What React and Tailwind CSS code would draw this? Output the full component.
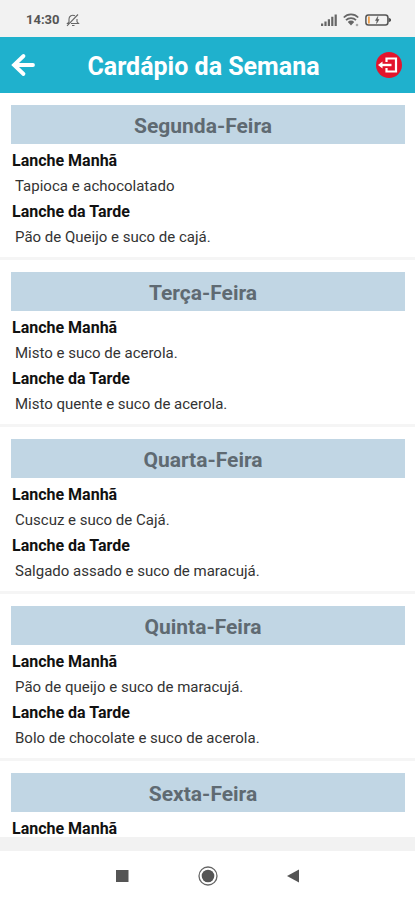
const days = [
  { name: "Segunda-Feira", morning: "Tapioca e achocolatado", afternoon: "Pão de Queijo e suco de cajá." },
  { name: "Terça-Feira", morning: "Misto e suco de acerola.", afternoon: "Misto quente e suco de acerola." },
  { name: "Quarta-Feira", morning: "Cuscuz e suco de Cajá.", afternoon: "Salgado assado e suco de maracujá." },
  { name: "Quinta-Feira", morning: "Pão de queijo e suco de maracujá.", afternoon: "Bolo de chocolate e suco de acerola." },
  { name: "Sexta-Feira", morning: "", afternoon: "" },
];

function MutedBell() {
  return (
    <svg className="h-3.5 w-3.5" viewBox="0 0 14 14" fill="none" stroke="#666" strokeWidth="1.100" aria-hidden="true">
      <path d="M5 10.500h7.500L11 8.800V6M9 2.800C6 1.300 3 3.200 3 6v2.800L1.500 10.500H3M6 12.500h2.500M1 12.800 12 1.500" />
    </svg>
  );
}

function Signal() {
  return (
    <svg className="h-3 w-4" viewBox="0 0 16 12" fill="#666" aria-hidden="true">
      <path d="M0 9.500h2.200V12H0zM3.400 7.500h2.200V12H3.400zM6.800 5.200H9V12H6.800zM10.200 2.800h2.200V12h-2.200zM13.600 0.500h2.200V12h-2.200z" />
    </svg>
  );
}

function Wifi() {
  return (
    <svg className="h-3.5 w-4" viewBox="0 0 16 14" fill="none" stroke="#666" aria-hidden="true">
      <path d="M0.800 4.500a10 10 0 0 1 14.400 0M3 7.200a7 7 0 0 1 10 0" strokeWidth="1.800" />
      <path d="M4.800 9a4.400 4.400 0 0 1 6.400 0L8 12.500z" fill="#666" stroke="none" />
      <circle cx="14" cy="12" r="1.300" fill="#aaa" stroke="none" />
    </svg>
  );
}

function Battery() {
  return (
    <svg className="h-3 w-[26px]" viewBox="0 0 26 12" fill="none" aria-hidden="true">
      <rect x="0.900" y="0.900" width="22" height="10.200" rx="2.500" stroke="#555" strokeWidth="1.500" />
      <path d="M23.500 3.500 26 5v2l-2.500 1.500z" fill="#555" />
      <path d="M3 2.500h1.800v7H3z" fill="#f0a04b" />
      <path d="M12.800 2.500 10.500 6.500h1.600l-.6 3 2.500-4h-1.600z" fill="#555" stroke="#555" strokeWidth="0.500" />
    </svg>
  );
}

function Day({ day }) {
  return (
    <section className="border-b-[3px] border-[#f5f5f5] pt-3 pr-2.5 pb-2 pl-[11px]">
      <h2 className="mb-1 flex h-[39px] items-center justify-center bg-[#c1d6e4] pt-[3px] pr-2.5 text-[21px] leading-6 font-bold text-[#5f6a72]">
        {day.name}
      </h2>
      <div className="pl-px">
        <h3 className="text-[16px] leading-[26px] font-bold text-[#111]">Lanche Manhã</h3>
        <p className="pl-[3px] text-[15px] leading-[25px] text-[#333]">{day.morning}</p>
        {day.afternoon && (
          <>
            <h3 className="text-[16px] leading-[26px] font-bold text-[#111]">Lanche da Tarde</h3>
            <p className="-mb-px pl-[3px] text-[15px] leading-[25px] text-[#333]">{day.afternoon}</p>
          </>
        )}
      </div>
    </section>
  );
}

export default function App() {
  return (
    <div className="flex h-screen flex-col bg-white font-[Roboto,'Liberation_Sans',sans-serif]">
      <div className="flex h-[37px] shrink-0 items-center justify-between bg-[#f2f2f2] pt-[2px] pr-6 pl-[26px]">
        <div className="flex items-center gap-1.5">
          <span className="text-[13px] leading-4 font-bold text-[#555]">14:30</span>
          <MutedBell />
        </div>
        <div className="flex items-center gap-1.5">
          <Signal />
          <Wifi />
          <Battery />
        </div>
      </div>

      <header className="flex h-14 shrink-0 items-center justify-between bg-[#1fb1cd] pr-3 pl-[11px]">
        <button type="button" aria-label="Voltar" className="text-white">
          <svg className="h-6 w-6" viewBox="0 0 24 24" fill="none" stroke="currentColor" strokeWidth="3.800" strokeLinecap="round" aria-hidden="true">
            <path d="M22 12H4M12.500 3 3 12l9.500 9" />
          </svg>
        </button>
        <h1 className="pt-[3px] pr-[3px] text-[25px] leading-8 font-bold text-white">Cardápio da Semana</h1>
        <button type="button" aria-label="Sair">
          <svg className="h-7 w-7" viewBox="0 0 28 28" fill="none" aria-hidden="true">
            <circle cx="14" cy="14" r="13" fill="#e3142c" />
            <path d="M11.500 11V7.500h9.500v13h-9.500V17" stroke="#fff" strokeWidth="2.200" />
            <path d="M16.500 14H6" stroke="#fff" strokeWidth="2.400" />
            <path d="M7.500 10.500 3 14l4.500 3.500z" fill="#fff" />
          </svg>
        </button>
      </header>

      <main className="min-h-0 flex-1 overflow-hidden">
        {days.map((day) => (
          <Day key={day.name} day={day} />
        ))}
      </main>

      <div className="h-3.5 shrink-0 bg-[#f2f2f2]" />
      <nav className="flex h-[49px] shrink-0 items-center justify-center gap-[65px] bg-white">
        <button type="button" aria-label="Aplicativos recentes">
          <svg className="h-5 w-5" viewBox="0 0 20 20" aria-hidden="true">
            <path d="M3 4h12.500v12H3z" fill="#555" />
          </svg>
        </button>
        <button type="button" aria-label="Início">
          <svg className="h-5 w-5" viewBox="0 0 20 20" aria-hidden="true">
            <circle cx="10" cy="10" r="9" fill="none" stroke="#666" strokeWidth="1.300" />
            <circle cx="10" cy="10" r="6.300" fill="#555" />
          </svg>
        </button>
        <button type="button" aria-label="Voltar à tela anterior">
          <svg className="h-5 w-5" viewBox="0 0 20 20" aria-hidden="true">
            <path d="M16 3.500v13L4 10z" fill="#555" />
          </svg>
        </button>
      </nav>
    </div>
  );
}
